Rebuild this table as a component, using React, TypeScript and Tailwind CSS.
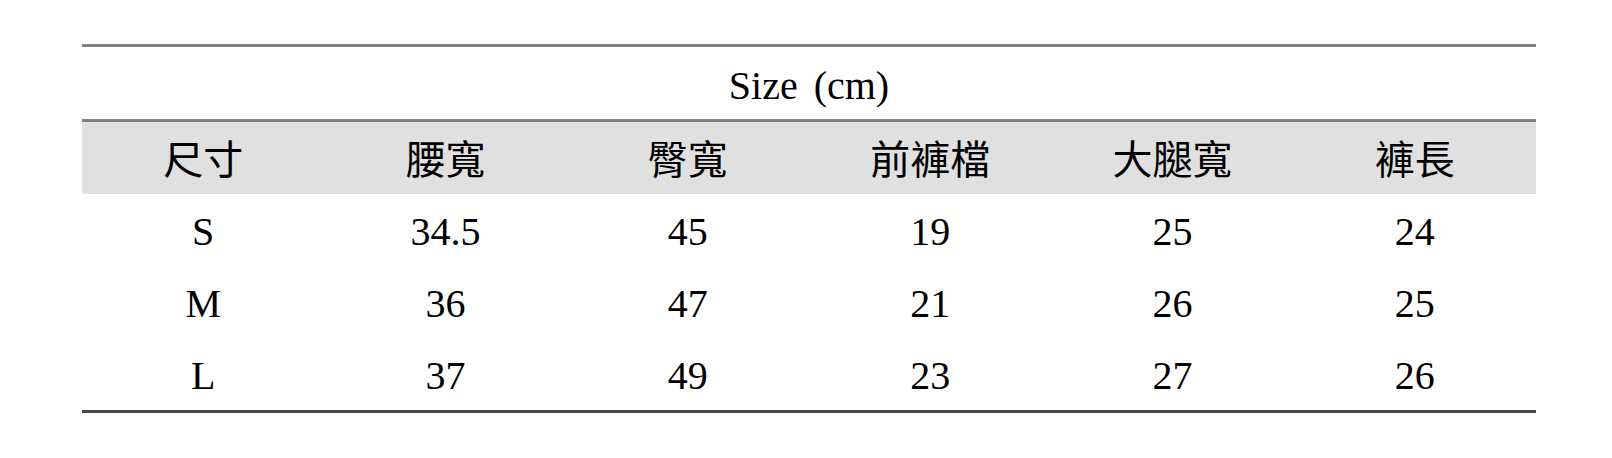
const headers = ["尺寸", "腰寬", "臀寬", "前褲檔", "大腿寬", "褲長"];

const rows = [
  ["S", "34.5", "45", "19", "25", "24"],
  ["M", "36", "47", "21", "26", "25"],
  ["L", "37", "49", "23", "27", "26"],
];

export default function App() {
  return (
    <div className="w-[1612px] h-[458px] bg-white pt-[44px] pl-[82px] pr-[76px] text-black text-[40px] font-['Liberation_Serif','Noto_Sans_CJK_TC',serif]">
      <div className="border-t-[3px] border-b-[3px] border-t-[#808080] border-b-[#474747]">
        <div className="h-[75px] pt-[5px] flex items-center justify-center border-b-[3px] border-[#808080] [word-spacing:6px]">
          Size (cm)
        </div>
        <div className="grid grid-cols-6 h-[72px] bg-[#e0e0e0]">
          {headers.map((h) => (
            <div key={h} className="flex items-center justify-center pt-[6px]">
              {h}
            </div>
          ))}
        </div>
        {rows.map((r) => (
          <div key={r[0]} className="grid grid-cols-6 h-[72px]">
            {r.map((c, i) => (
              <div key={i} className="flex items-center justify-center pt-[4px]">
                {c}
              </div>
            ))}
          </div>
        ))}
      </div>
    </div>
  );
}
